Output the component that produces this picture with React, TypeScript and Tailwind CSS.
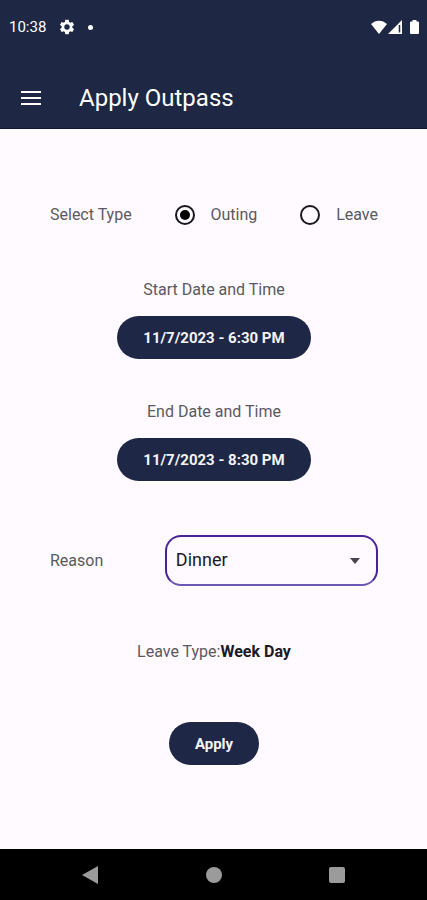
import { useState } from "react";

const pill =
  "h-[43px] rounded-full bg-[#1e2746] px-[26px] text-[15px] font-bold text-[#f4f4f8]";

function StatusBar() {
  return (
    <div className="flex h-[54px] items-center justify-between pr-[7px] pl-[9px]">
      <div className="flex items-center gap-3">
        <span className="text-[15px]">10:38</span>
        <svg className="size-[18px]" viewBox="0 0 24 24" fill="currentColor" aria-hidden="true">
          <path d="M19.14 12.94c.04-.3.06-.61.06-.94 0-.32-.02-.64-.07-.94l2.03-1.58a.49.49 0 0 0 .12-.61l-1.92-3.32a.49.49 0 0 0-.59-.22l-2.39.96c-.5-.38-1.03-.7-1.62-.94l-.36-2.54a.48.48 0 0 0-.48-.41h-3.84c-.24 0-.43.17-.47.41l-.36 2.54c-.59.24-1.13.57-1.62.94l-2.39-.96a.49.49 0 0 0-.59.22L2.74 8.87c-.12.21-.08.47.12.61l2.03 1.58c-.05.3-.09.63-.09.94s.02.64.07.94l-2.03 1.58a.49.49 0 0 0-.12.61l1.92 3.32c.12.22.37.29.59.22l2.39-.96c.5.38 1.03.7 1.62.94l.36 2.54c.05.24.24.41.48.41h3.84c.24 0 .44-.17.47-.41l.36-2.54c.59-.24 1.13-.56 1.62-.94l2.39.96c.22.08.47 0 .59-.22l1.92-3.32a.49.49 0 0 0-.12-.61l-2.01-1.58zM12 15.6A3.6 3.6 0 1 1 12 8.400a3.600 3.600 0 0 1 0 7.200z" />
        </svg>
        <span className="size-[5px] rounded-full bg-white" />
      </div>
      <svg className="h-4 w-[50px]" viewBox="0 0 50 16" fill="currentColor" aria-hidden="true">
        <path d="M1 5C5.500.500 12.500.500 17 5L9 15z" />
        <path d="M32 1v14H18z" />
        <path d="M29.500 6v7.500" stroke="#1e2746" strokeWidth="1.500" />
        <path d="M41 2.500h1.500V1h4v1.500H48q1 0 1 1V14q0 1-1 1h-7q-1 0-1-1V3.500q0-1 1-1z" />
      </svg>
    </div>
  );
}

function Radio(props: { label: string; checked: boolean; onSelect: () => void }) {
  return (
    <label className="flex items-center gap-4">
      <input
        type="radio"
        name="type"
        checked={props.checked}
        onChange={props.onSelect}
        className="grid size-5 appearance-none place-items-center rounded-full border-2 border-[#18171b] before:size-[10px] before:rounded-full checked:before:bg-black"
      />
      {props.label}
    </label>
  );
}

function DateField(props: { id: string; label: string; value: string }) {
  return (
    <div className="flex flex-col items-center gap-4">
      <label htmlFor={props.id}>{props.label}</label>
      <button id={props.id} type="button" className={pill}>
        {props.value}
      </button>
    </div>
  );
}

export default function App() {
  const [type, setType] = useState("Outing");
  const [reason, setReason] = useState("Dinner");

  return (
    <div className="flex min-h-screen flex-col bg-[#fefaff] font-[Roboto,sans-serif] text-base leading-5 text-[#5b595e]">
      <header className="bg-[#1e2743] text-white">
        <StatusBar />
        <div className="mt-[14px] flex h-[61px] items-center gap-[38px] border-b border-[#11172d] pl-[21px]">
          <button type="button" aria-label="Menu">
            <svg className="h-[14px] w-5" viewBox="0 0 20 14" fill="currentColor" aria-hidden="true">
              <path d="M0 0h20v2H0zM0 6h20v2H0zM0 12h20v2H0z" />
            </svg>
          </button>
          <h1 className="text-2xl">Apply Outpass</h1>
        </div>
      </header>

      <main className="flex-1 pt-[76px] pr-[49px] pl-[50px]">
        <form className="flex flex-col" onSubmit={(e) => e.preventDefault()}>
          <div role="radiogroup" aria-labelledby="type-label" className="flex items-center justify-between">
            <span id="type-label">Select Type</span>
            <Radio label="Outing" checked={type === "Outing"} onSelect={() => setType("Outing")} />
            <Radio label="Leave" checked={type === "Leave"} onSelect={() => setType("Leave")} />
          </div>

          <div className="mt-[55px] flex flex-col gap-[43px]">
            <DateField id="start" label="Start Date and Time" value="11/7/2023 - 6:30 PM" />
            <DateField id="end" label="End Date and Time" value="11/7/2023 - 8:30 PM" />
          </div>

          <div className="mt-[54px] flex items-center justify-between">
            <label htmlFor="reason">Reason</label>
            <div className="relative w-[65%]">
              <select
                id="reason"
                value={reason}
                onChange={(e) => setReason(e.target.value)}
                className="h-[51px] w-full appearance-none rounded-2xl border-2 border-[#4a2196] border-b-[#6c57b4] bg-transparent pr-10 pb-[2px] pl-[9px] text-lg text-[#1b1a1e]"
              >
                <option>Dinner</option>
                <option>Shopping</option>
                <option>Other</option>
              </select>
              <svg
                className="pointer-events-none absolute top-1/2 right-[18px] h-[6px] w-[10px] -translate-y-1/2"
                viewBox="0 0 10 6"
                fill="#49454f"
                aria-hidden="true"
              >
                <path d="M0 0h10L5 6z" />
              </svg>
            </div>
          </div>

          <p className="mt-[56px] text-center">
            Leave Type:<strong className="font-bold text-[#1b1a1e]">Week Day</strong>
          </p>
          <button type="submit" className={`${pill} mt-[60px] self-center`}>
            Apply
          </button>
        </form>
      </main>

      <nav className="grid h-[51px] grid-cols-[1fr_66px_1fr] items-center bg-black text-[#9b9b9b]">
        <button type="button" aria-label="Back" className="justify-self-center">
          <svg className="h-5 w-[18px]" viewBox="0 0 18 20" fill="currentColor" aria-hidden="true">
            <path d="M17 1v18L1 10z" />
          </svg>
        </button>
        <button type="button" aria-label="Home" className="size-4 justify-self-center rounded-full bg-current" />
        <button type="button" aria-label="Recent apps" className="size-4 justify-self-center rounded-xs bg-current" />
      </nav>
    </div>
  );
}
